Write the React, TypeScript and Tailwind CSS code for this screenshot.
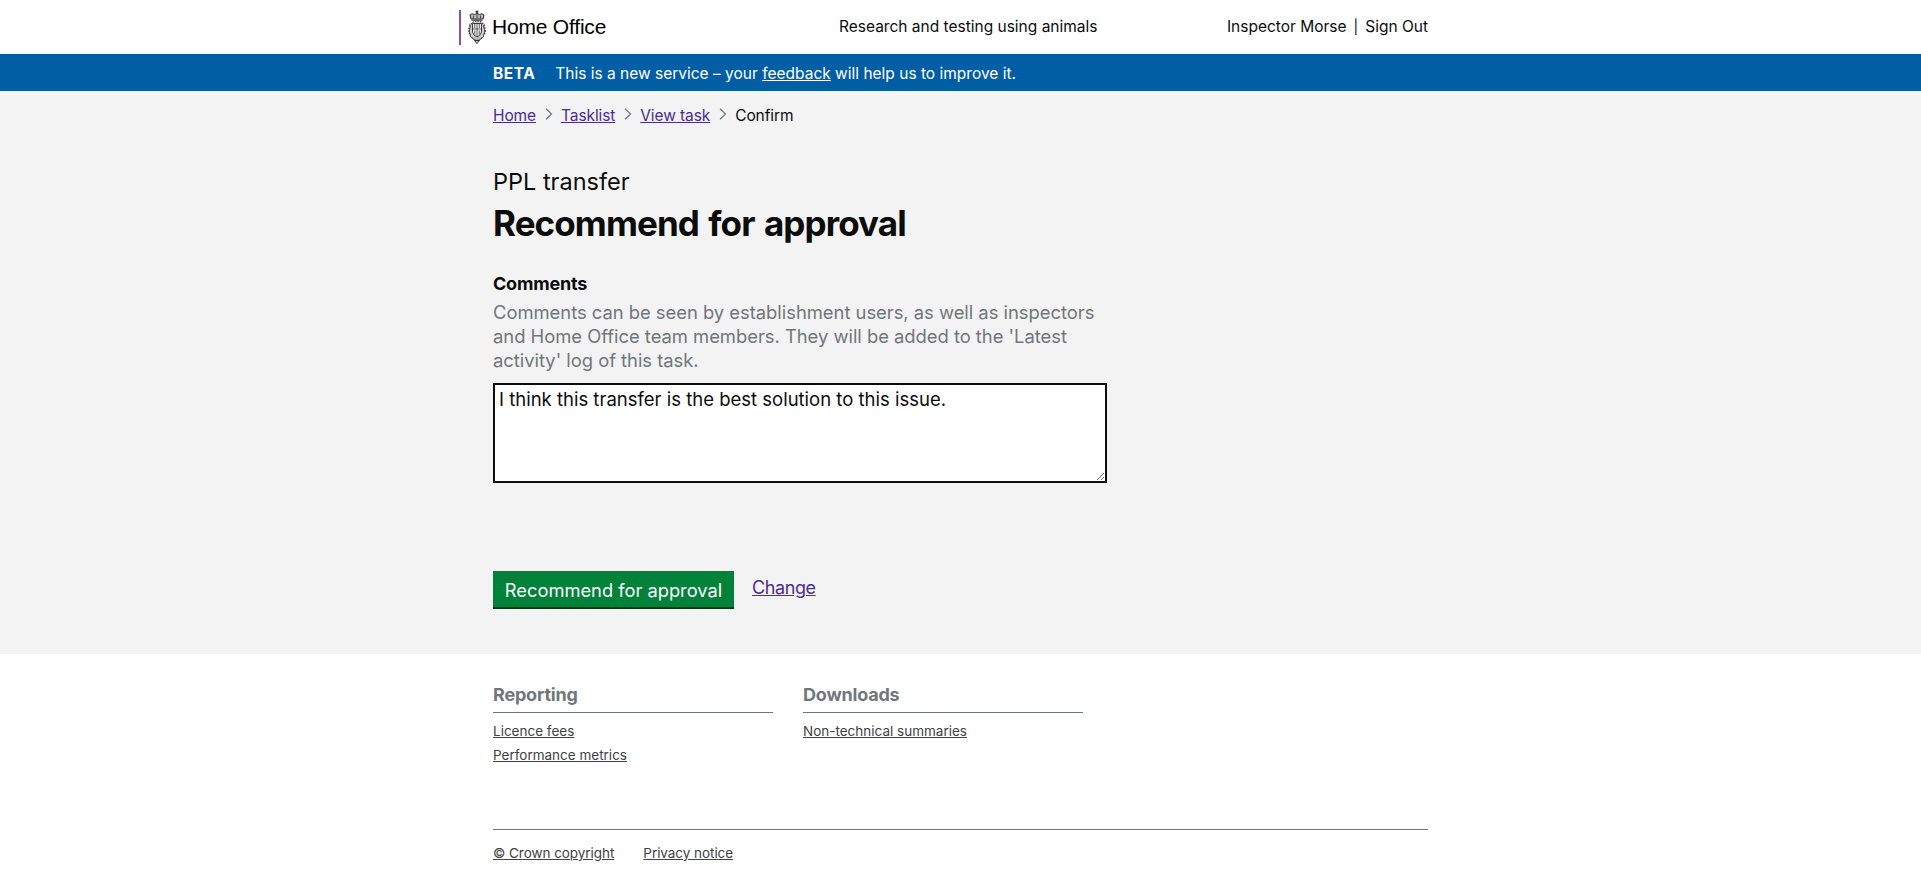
import React from "react";

function Crest() {
  return (
    <svg width="20" height="34" viewBox="0 0 20 34" fill="none" stroke="#2a2a2a">
      <path d="M10 0.5v4M8.5 1.8h3" strokeWidth="1.2" />
      <path d="M4 9L3 5Q5 2.800 7.500 4.500Q10 2.500 12.500 4.500Q15 2.800 17 5L16 9Z" fill="#bbb" strokeWidth="1" />
      <path d="M6.500 5.500v3M10 4.500v4M13.500 5.500v3" strokeWidth="0.8" />
      <path d="M4.500 10.200h11" strokeWidth="1" />
      <ellipse cx="10" cy="20.3" rx="8.2" ry="9.4" fill="#cfcfcf" strokeWidth="1.1" strokeDasharray="1.6 1" />
      <path d="M5.5 13.5h9v8.5q-.8 3.5-4.5 5q-3.7-1.5-4.5-5z" fill="#eee" strokeWidth="0.9" />
      <path d="M10 13v14M5.5 19h9M7.7 14v4M12.3 14v4M7.8 20.500v4M12.3 20.500v4" strokeWidth="0.7" />
      <path d="M2.500 14q2 2 .3 5t1 6M17.500 14q-2 2-.3 5t-1 6" strokeWidth="0.7" />
      <path d="M4.500 27q2.500 4 5.500 3.500q3 .5 5.500-3.500M7.500 30.500l2.500 3l2.500-3z" fill="#bbb" strokeWidth="0.9" />
    </svg>
  );
}

function Chevron() {
  return (
    <svg className="mr-[8px] mb-[4px] ml-[9px]" width="8" height="12" viewBox="0 0 8 12" fill="none" stroke="#6f777b" strokeWidth="1.2">
      <path d="M1 .8L6.500 6L1 11.200" />
    </svg>
  );
}

const crumbs = ["Home", "Tasklist", "View task"];

const footerColumns = [
  { title: "Reporting", links: ["Licence fees", "Performance metrics"] },
  { title: "Downloads", links: ["Non-technical summaries"] },
];

export default function App() {
  return (
    <div className="min-h-screen bg-white font-['Inter',sans-serif] text-[#0b0c0c]">
      <header className="mx-auto h-[54px] w-[935px]">
        <div className="-ml-[34px] grid h-full grid-cols-[380px_1fr_auto] items-center">
          <div className="flex h-[35px] items-center border-l-2 border-[#8f4cab] pl-[6px]">
            <Crest />
            <span className="mb-[2px] ml-[5px] font-['Liberation_Sans',sans-serif] text-[21px] leading-none tracking-[-0.2px] text-black">
              Home Office
            </span>
          </div>
          <span className="text-[15.5px] leading-5">Research and testing using animals</span>
          <div className="flex text-[15.5px] leading-5">
            <a href="#">Inspector Morse</a>
            <span className="mx-[7px] text-[14px]">|</span>
            <a href="#">Sign Out</a>
          </div>
        </div>
      </header>
      <div className="h-[37px] bg-[#005ea5] text-white">
        <div className="mx-auto flex h-full w-[935px] items-center pt-[3px] text-[15.5px] leading-5">
          <strong className="mr-[20px] font-bold tracking-[0.5px]">BETA</strong>
          <p>
            This is a new service – your <a href="#" className="underline">feedback</a> will help us to improve it.
          </p>
        </div>
      </div>
      <main className="h-[563px] bg-[#f3f3f3]">
        <div className="mx-auto w-[935px] pt-[15px]">
          <nav className="flex h-5 items-center text-[15.5px] leading-5 tracking-[-0.1px]">
            {crumbs.map((c) => (
              <React.Fragment key={c}>
                <a href="#" className="text-[#4c2c92] underline">{c}</a>
                <Chevron />
              </React.Fragment>
            ))}
            <span>Confirm</span>
          </nav>
          <h1 className="mt-[41px]">
            <span className="block text-[23.5px] leading-[30px] font-normal">PPL transfer</span>
            <span className="mt-[6px] block text-[35px] leading-[40px] font-bold tracking-[-0.9px] [word-spacing:2px]">Recommend for approval</span>
          </h1>
          <form className="mt-[29px] w-[614px]">
            <label className="block text-lg leading-6 font-bold tracking-[-0.2px]">Comments</label>
            <p className="mt-[4px] text-[18.4px] leading-6 tracking-[-0.02px] text-[#6f777b]">
              Comments can be seen by establishment users, as well as inspectors and Home Office team members. They will be added to the 'Latest activity' log of this task.
            </p>
            <textarea
              className="mt-[11px] block h-[100px] w-[614px] resize border-2 border-[#0b0c0c] bg-white px-1 py-[3px] text-[18.5px] leading-[23px]"
              defaultValue="I think this transfer is the best solution to this issue."
            />
            <div className="mt-[88px] flex">
              <button type="button" className="h-[38px] w-[241px] border-b-2 border-[#003618] bg-[#00823b] pt-px text-[18.3px] leading-6 text-white">
                Recommend for approval
              </button>
              <a href="#" className="mt-[5px] ml-[18px] text-[18px] leading-6 tracking-[-0.4px] text-[#4c2c92] underline">Change</a>
            </div>
          </form>
        </div>
      </main>
      <footer className="mx-auto w-[935px] pt-[29px] text-[#404244]">
        <div className="flex h-[146px] gap-[30px]">
          {footerColumns.map((col) => (
            <section key={col.title} className="w-[280px]">
              <h2 className="h-[30px] border-b border-[#6f777b] text-lg leading-6 font-bold tracking-[-0.2px] text-[#6f777b]">{col.title}</h2>
              <ul className="mt-[6px] text-[13.5px] leading-6">
                {col.links.map((l) => (
                  <li key={l}>
                    <a href="#" className="underline">{l}</a>
                  </li>
                ))}
              </ul>
            </section>
          ))}
        </div>
        <div className="flex gap-[29px] border-t border-[#6f777b] pt-[11px] text-[13.5px] leading-6 tracking-[-0.05px]">
          <a href="#" className="underline">© Crown copyright</a>
          <a href="#" className="underline">Privacy notice</a>
        </div>
      </footer>
    </div>
  );
}
